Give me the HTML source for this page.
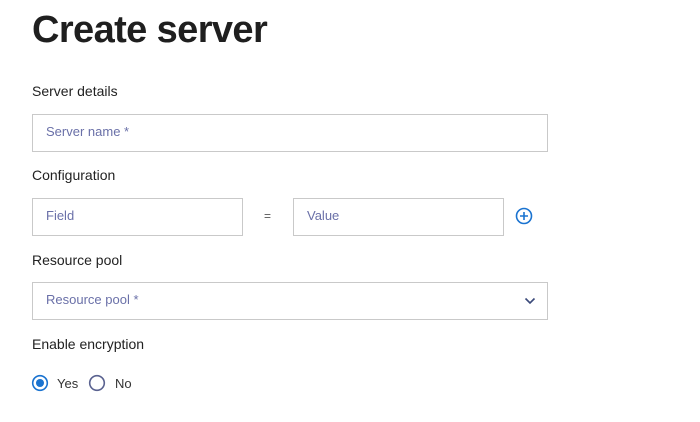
<!DOCTYPE html>
<html><head><style>
body{margin:0;width:700px;height:422px;background:#fff;font-family:"Liberation Sans",sans-serif;position:relative;overflow:hidden}
.a{position:absolute}
h1{position:absolute;left:32px;top:9px;margin:0;font-size:38px;font-weight:bold;color:#1f1f1f;letter-spacing:-0.6px}
.lbl{position:absolute;left:32px;font-size:14px;color:#222}
.box{position:absolute;border:1px solid #c9c9c9;box-sizing:border-box;height:38px}
.ph{position:absolute;left:13px;top:9px;font-size:13px;color:#6a70a8}
</style></head><body>
<h1>Create server</h1>
<div class="lbl" style="top:83px">Server details</div>
<div class="box" style="left:32px;top:114px;width:516px"><span class="ph">Server name *</span></div>
<div class="lbl" style="top:167px">Configuration</div>
<div class="box" style="left:32px;top:198px;width:211px"><span class="ph">Field</span></div>
<div class="a" style="left:264px;top:209px;font-size:12px;color:#555">=</div>
<div class="box" style="left:293px;top:198px;width:211px"><span class="ph">Value</span></div>
<svg class="a" style="left:515px;top:207px" width="18" height="18" viewBox="0 0 18 18"><circle cx="9" cy="9" r="7.5" fill="none" stroke="#1a73d0" stroke-width="1.6"/><path d="M9 5v8M5 9h8" stroke="#1a73d0" stroke-width="1.6"/></svg>
<div class="lbl" style="top:252px">Resource pool</div>
<div class="box" style="left:32px;top:282px;width:516px"><span class="ph">Resource pool *</span>
<svg class="a" style="left:491px;top:14px" width="12" height="8" viewBox="0 0 12 8"><path d="M1.5 1.5L6 6l4.5-4.5" fill="none" stroke="#3b4a7a" stroke-width="1.6"/></svg></div>
<div class="lbl" style="top:336px">Enable encryption</div>
<svg class="a" style="left:31px;top:374px" width="18" height="18"><circle cx="9" cy="9" r="7.3" fill="none" stroke="#1a73d0" stroke-width="1.6"/><circle cx="9" cy="9" r="4" fill="#1a73d0"/></svg>
<div class="a" style="left:57px;top:376px;font-size:13px;color:#333">Yes</div>
<svg class="a" style="left:88px;top:374px" width="18" height="18"><circle cx="9" cy="9" r="7.3" fill="none" stroke="#5a6290" stroke-width="1.6"/></svg>
<div class="a" style="left:115px;top:376px;font-size:13px;color:#333">No</div>
</body></html>
